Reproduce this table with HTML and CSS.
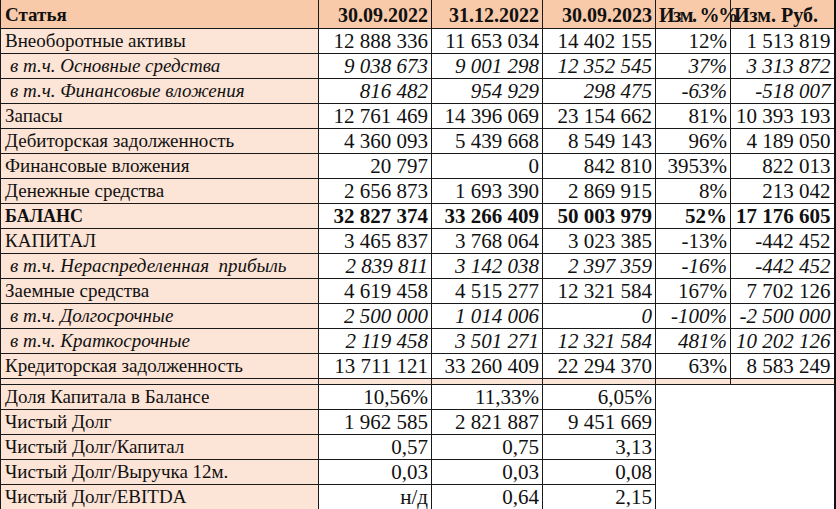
FILE: index.html
```html
<!DOCTYPE html>
<html lang="ru">
<head>
<meta charset="utf-8">
<title>Баланс</title>
<link rel="stylesheet" href="styles.css">
</head>
<body>
<table class="bal">
<colgroup>
<col class="c1"><col class="c2"><col class="c3"><col class="c4"><col class="c5"><col class="c6">
</colgroup>
<thead>
<tr class="head">
<th class="name">Статья</th><th>30.09.2022</th><th>31.12.2022</th><th>30.09.2023</th><th class="lft pct">Изм. %%</th><th class="lft">Изм. Руб.</th>
</tr>
</thead>
<tbody>
<tr><td class="name">Внеоборотные активы</td><td>12 888 336</td><td>11 653 034</td><td>14 402 155</td><td>12%</td><td>1 513 819</td></tr>
<tr class="it"><td class="name">в т.ч. Основные средства</td><td>9 038 673</td><td>9 001 298</td><td>12 352 545</td><td>37%</td><td>3 313 872</td></tr>
<tr class="it"><td class="name">в т.ч. Финансовые вложения</td><td>816 482</td><td>954 929</td><td>298 475</td><td>-63%</td><td>-518 007</td></tr>
<tr><td class="name">Запасы</td><td>12 761 469</td><td>14 396 069</td><td>23 154 662</td><td>81%</td><td>10 393 193</td></tr>
<tr><td class="name">Дебиторская задолженность</td><td>4 360 093</td><td>5 439 668</td><td>8 549 143</td><td>96%</td><td>4 189 050</td></tr>
<tr><td class="name">Финансовые вложения</td><td>20 797</td><td>0</td><td>842 810</td><td>3953%</td><td>822 013</td></tr>
<tr><td class="name">Денежные средства</td><td>2 656 873</td><td>1 693 390</td><td>2 869 915</td><td>8%</td><td>213 042</td></tr>
<tr class="bold"><td class="name">БАЛАНС</td><td>32 827 374</td><td>33 266 409</td><td>50 003 979</td><td>52%</td><td>17 176 605</td></tr>
<tr><td class="name">КАПИТАЛ</td><td>3 465 837</td><td>3 768 064</td><td>3 023 385</td><td>-13%</td><td>-442 452</td></tr>
<tr class="it"><td class="name">в т.ч. Нераспределенная&nbsp; прибыль</td><td>2 839 811</td><td>3 142 038</td><td>2 397 359</td><td>-16%</td><td>-442 452</td></tr>
<tr><td class="name">Заемные средства</td><td>4 619 458</td><td>4 515 277</td><td>12 321 584</td><td>167%</td><td>7 702 126</td></tr>
<tr class="it"><td class="name">в т.ч. Долгосрочные</td><td>2 500 000</td><td>1 014 006</td><td>0</td><td>-100%</td><td>-2 500 000</td></tr>
<tr class="it"><td class="name">в т.ч. Краткосрочные</td><td>2 119 458</td><td>3 501 271</td><td>12 321 584</td><td>481%</td><td>10 202 126</td></tr>
<tr><td class="name">Кредиторская задолженность</td><td>13 711 121</td><td>33 260 409</td><td>22 294 370</td><td>63%</td><td>8 583 249</td></tr>
<tr class="sep"><td></td><td></td><td></td><td></td><td></td><td></td></tr>
<tr><td class="name">Доля Капитала в Балансе</td><td>10,56%</td><td>11,33%</td><td>6,05%</td><td class="blank" colspan="2" rowspan="5"></td></tr>
<tr><td class="name">Чистый Долг</td><td>1 962 585</td><td>2 821 887</td><td>9 451 669</td></tr>
<tr><td class="name">Чистый Долг/Капитал</td><td>0,57</td><td>0,75</td><td>3,13</td></tr>
<tr><td class="name">Чистый Долг/Выручка 12м.</td><td>0,03</td><td>0,03</td><td>0,08</td></tr>
<tr class="last"><td class="name">Чистый Долг/EBITDA</td><td>н/д</td><td>0,64</td><td>2,15</td></tr>
</tbody>
</table>
</body>
</html>
```
FILE: styles.css
```css
html, body {
  margin: 0;
  padding: 0;
  background: #ffffff;
}

.bal {
  border-collapse: collapse;
  table-layout: fixed;
  width: 834px;
  font-family: "Liberation Serif", "Times New Roman", serif;
  font-size: 21px;
  color: #111111;
  border-left: 1px solid #222;
  border-right: 2px solid #111;
  border-bottom: 2px solid #111;
}

.c1 { width: 318px; }
.c2 { width: 113px; }
.c3 { width: 111px; }
.c4 { width: 113px; }
.c5 { width: 75px; }
.c6 { width: 104px; }

.bal th,
.bal td {
  border: 1px solid #1a1a1a;
  padding: 0 3px 0 4px;
  height: 24px;
  line-height: 22px;
  text-align: right;
  white-space: nowrap;
  overflow: hidden;
  background: #ffffff;
}

.bal .head th {
  background: #f8caa9;
  font-weight: bold;
  font-size: 20px;
  height: 27px;
  line-height: 26px;
  border-top: none;
  padding-top: 1px;
}

.bal .head th.name {
  text-align: left;
  font-size: 19px;
}

.bal .head th.lft {
  text-align: left;
  overflow: visible;
  padding-left: 3px;
}

.bal .head th.pct {
  letter-spacing: -1.3px;
}

.bal td.name {
  background: #fce4d6;
  text-align: left;
  font-size: 19px;
}

.bal .it td {
  font-style: italic;
}

.bal .it td.name {
  padding-left: 9px;
}

.bal .bold td {
  font-weight: bold;
}

.bal .bold td.name {
  font-size: 18px;
}

.bal .sep td {
  height: 5px;
  padding: 0;
  line-height: 0;
  background: #fce4d6;
}

.bal td.blank {
  background: #ffffff;
  border-right: none;
  border-bottom: none;
}
```
